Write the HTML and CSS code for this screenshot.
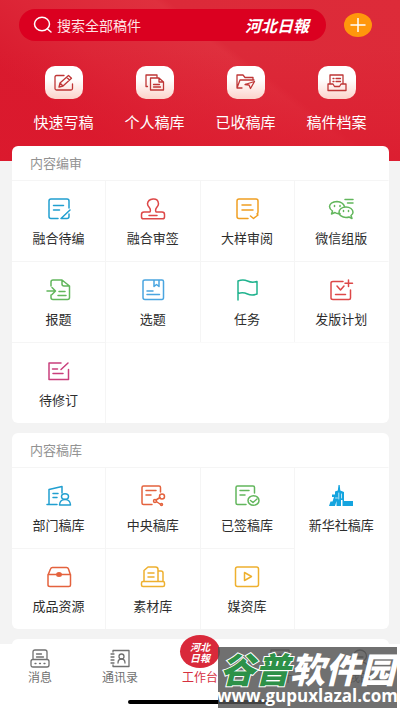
FILE: index.html
```html
<!DOCTYPE html>
<html lang="zh-CN">
<head>
<meta charset="utf-8">
<meta name="viewport" content="width=device-width, initial-scale=1">
<title>工作台</title>
<link rel="stylesheet" href="styles.css">
</head>
<body>
<div class="app">
  <main class="content">
    <header class="top">
      <div class="search-row">
        <label class="search">
          <svg class="search-icon" viewBox="0 0 20 18"><ellipse cx="9" cy="8" rx="7.5" ry="6.8"/><path d="M14.2 12.8 18 16"/></svg>
          <input type="search" placeholder="搜索全部稿件" aria-label="搜索全部稿件">
          <span class="brand">河北日報</span>
        </label>
        <button class="add" aria-label="新建"><svg viewBox="0 0 16 14"><path d="M8 .5v13M1 7h14"/></svg></button>
      </div>
      <nav class="shortcuts">
        <a href="#"><span class="tile"><svg viewBox="0 0 22 20"><path d="M11 2.500H3.500Q2 2.500 2 4v11.500q0 1.500 1.500 1.500H18q1.500 0 1.500-1.500V11M6 14l1-4 8.500-7.500 3 2.700-8.500 7.800zM7 10l3 3M13.500 4.300l3 2.700"/></svg></span><span>快速写稿</span></a>
        <a href="#"><span class="tile"><svg viewBox="0 0 22 20"><path d="M3.500 13.500H2V2h11v2M6.500 5h8.500l4.500 4v8h-13zM15 5v4h4.500M9.500 11.500h6M9.500 14h7"/></svg></span><span>个人稿库</span></a>
        <a href="#"><span class="tile"><svg viewBox="0 0 22 20"><path d="M2 15V2h6l2 2.500h8V7M2 15l3-8h14M2 15h5M5 7h12M10 11.500l9.500-3-4 7-1.500-3.500z"/></svg></span><span>已收稿库</span></a>
        <a href="#"><span class="tile"><svg viewBox="0 0 22 20"><path d="M4 11V2h13v9M7 5.500h1M10 5.500h4.500M7 8.500h1M10 8.500h4.500M2 11h5l1.500 2.500h5L15 11h5v6.500H2z"/></svg></span><span>稿件档案</span></a>
      </nav>
    </header>

    <div class="cards">
      <section class="card">
        <h2>内容编审</h2>
        <div class="grid">
          <a class="c-blue" href="#"><svg viewBox="0 0 26 22"><path d="M12 20.500H5q-2 0-2-2V3q0-2 2-2h16q2 0 2 2v7M7.500 7.500h10M7.500 12h6M15 20.500l9-8.500M15 20.500h6q2 0 2-2V16"/></svg><span>融合待编</span></a>
          <a class="c-red" href="#"><svg viewBox="0 0 26 22"><path d="M10 14c2-4-2.500-4.500-2.500-8.300Q8 1.500 13 1t5.500 4.700C18.500 9.500 14 10 16 14h6q2.500 0 2.500 2.500V19q0 1.800-2 1.800h-19q-2 0-2-1.800v-2.500Q1.500 14 4 14zM9 17.500h8"/></svg><span>融合审签</span></a>
          <a class="c-orange" href="#"><svg viewBox="0 0 26 22"><path d="M14 20.500H5q-2 0-2-2V3q0-2 2-2h17q2 0 2 2v11q0 1.500-1 2M8 7h9M8 12h11M16.500 18l3 2.500 4.500-3.500"/></svg><span>大样审阅</span></a>
          <a class="c-green" href="#"><svg viewBox="0 0 26 22"><path d="M17 1.500h8M19.500 5H25M12 15.500q-3 .5-5-1L3.500 16l1-3Q1.500 11 1.500 8.500 2 4 9 3.500q6 .5 7.500 5M6.500 7.500v1M12 7.500v1"/><path d="M18 9c-4 0-7 2.300-7 5.200s3 5.300 7 5.300q2 0 3-.5l3 1.500-1-3q2-1.500 2-3.300C25 11.300 22 9 18 9zM15.500 12.500v1M20.500 12.500v1"/></svg><span>微信组版</span></a>
          <a class="c-green" href="#"><svg viewBox="0 0 26 22"><path d="M5 7V3q0-2 2-2h9l7.500 6v11.500q0 2-2 2H7q-2 0-2-2V16M16 1v4q0 2 2 2h5.500M1 12h8M6 8.500 9.500 12 6 15.500M13 12.500h6M12 16.500h8"/></svg><span>报题</span></a>
          <a class="c-sky" href="#"><svg viewBox="0 0 26 22"><path d="M5 1h17q1.500 0 1.500 1.500v16q0 2-1.500 2H5q-2 0-2-2v-16Q3 1 5 1zM14 1.500v6l2.500-2L19 7.500v-6M7 12h6M7 15.500h12.500"/></svg><span>选题</span></a>
          <a class="c-teal" href="#"><svg viewBox="0 0 26 22"><path d="M4 21V2q5-2 9.500 0T23 2.500V15q-5 2-9.500 0T4 14.500"/></svg><span>任务</span></a>
          <a class="c-red" href="#"><svg viewBox="0 0 26 22"><path d="M15 2.500H5Q3 2.500 3 4v15q0 1.500 2 1.500h16q1.500 0 1.500-1.500v-8M20.500 1v6.500M17 4.300h7.500M9 7l3.500 4L16 7M7.500 15.500h10"/></svg><span>发版计划</span></a>
          <a class="c-pink" href="#"><svg viewBox="0 0 26 22"><path d="M15 3H3v16.500h19.500V9.500M6.500 9h5M7 13.500h10M15 9.500 22 3"/></svg><span>待修订</span></a>
          <div class="blank"></div>
        </div>
      </section>

      <section class="card">
        <h2>内容稿库</h2>
        <div class="grid">
          <a class="c-blue" href="#"><svg viewBox="0 0 26 22"><path d="M3 19.500V4.500L16 1.500V8M1 19.500h10M7 8.500h5M7 12.500h4"/><ellipse cx="19" cy="11.500" rx="3.500" ry="2.800"/><path d="M13.500 20c0-7.500 11-7.500 11 0z"/></svg><span>部门稿库</span></a>
          <a class="c-coral" href="#"><svg viewBox="0 0 26 22"><path d="M12 19.500H3.500Q2 19.500 2 18V2.500Q2 1 3.500 1H19q1.500 0 1.500 1.500V7M6 5.500h10M6 10h5M16 15l4-2.500M17 17l3 2"/><circle cx="22" cy="11.500" r="2.500"/><circle cx="15" cy="16" r="1.500"/><circle cx="21.500" cy="19.500" r="1"/></svg><span>中央稿库</span></a>
          <a class="c-green" href="#"><svg viewBox="0 0 26 22"><path d="M12 19.500H3.500Q2 19.500 2 18V2.500Q2 1 3.500 1H19q1.500 0 1.500 1.500V8M6 5.500h9M6 10h5"/><ellipse cx="19.500" cy="15.500" rx="5.500" ry="4.800"/><path d="m16.500 15.500 2.500 2 4-3.500"/></svg><span>已签稿库</span></a>
          <a class="c-cyan" href="#"><svg viewBox="0 0 26 22"><path class="solid" d="M10.500 0h1.200l.6 5.500 3.700 1.500V16h9v5H14.500v-6h-1.500v6H8.500v-5L7 21H1l1.500-4.500h2L6 12H4V9.500h3V6.500l2.800-1z"/><path class="cut" d="M10.800 8v6M13.500 9v4M7.500 13h2"/></svg><span>新华社稿库</span></a>
          <a class="c-coral" href="#"><svg viewBox="0 0 26 22"><path d="M6.500 1.500h14q1.500 0 2 1.500l2 6v10q0 1.500-1.500 1.500H4Q2 20.500 2 19V9l2.500-6q.5-1.500 2-1.500zM2 8.500h8M16 8.500h8.500"/><ellipse class="solid" cx="13" cy="8.500" rx="3" ry="2.500"/></svg><span>成品资源</span></a>
          <a class="c-amber" href="#"><svg viewBox="0 0 26 22"><path d="M4 15V4.500L8 1h7.500Q18 1 18 3.500V15M18 5h3q2 0 2 2v8M8 7h6M8 11h6M3 15.500h20q1.500 0 1.500 1.500v2q0 1.500-1.500 1.500H3q-1.500 0-1.500-1.500v-2q0-1.500 1.500-1.500z"/></svg><span>素材库</span></a>
          <a class="c-amber" href="#"><svg viewBox="0 0 26 22"><rect x="1.500" y="1" width="23" height="19.500" rx="2"/><path d="M10.500 6.500v8l7-4z"/></svg><span>媒资库</span></a>
        </div>
      </section>
      <section class="card card-next"></section>
    </div>
  </main>

  <nav class="tabs">
    <a href="#"><svg viewBox="0 0 20 19"><path d="M3 10V3q0-2 2-2h10q2 0 2 2v7M6.500 5h5M6.500 8h7M3 10.500h14q2 0 2 2V16q0 2-2 2H3q-2 0-2-2v-3.500q0-2 2-2zM5 14.500h1M9.500 14.500h1M14 14.500h1"/></svg><span>消息</span></a>
    <a href="#"><svg viewBox="0 0 20 19"><path d="M3 3V1.500h16V17.500H3V16M1 5h3M1 8h3M1 11h3M1 14h3M8 14q0-4 3.500-4t3.500 4"/><circle cx="11.500" cy="7.500" r="2.500"/></svg><span>通讯录</span></a>
    <a class="active" href="#"><b class="seal">河北<br>日報</b><span>工作台</span></a>
    <a href="#"><svg viewBox="0 0 20 19"><path d="M1 1h18v16H1zM7 7l3-2 1 2 3-2"/></svg><span>统计</span></a>
    <a href="#"><svg viewBox="0 0 20 19"><ellipse cx="10" cy="7" rx="6.500" ry="6"/><path d="M7 8h6M2 18q1-5 8-5t8 5"/></svg><span>我的</span></a>
    <div class="home-bar"></div>
  </nav>
  <div class="watermark">
    <strong><em>谷普</em>软件园</strong>
    <span>www.gupuxlazal.com</span>
  </div>
</div>
</body>
</html>
```
FILE: styles.css
```css
* { box-sizing: border-box; }
body {
  margin: 0;
  font-family: "Noto Sans CJK SC", sans-serif;
  background: #f3f3f3;
  color: #2d2d2d;
}
a { color: inherit; text-decoration: none; }
svg {
  display: block;
  fill: none;
  stroke: currentColor;
  stroke-width: 1.5;
  stroke-linecap: round;
  stroke-linejoin: round;
}
.app {
  position: relative;
  height: 100vh;
  display: flex;
  flex-direction: column;
}
.content {
  flex: 1;
  min-height: 0;
  overflow-y: auto;
  scrollbar-width: none;
}

/* header */
.top {
  padding: 9px 18px 29px;
  background:
    linear-gradient(to bottom, transparent 30%, rgba(220, 25, 45, .7)),
    linear-gradient(37deg, #d91a2e 0 20%, #dd2637 38%, #df303e 60%, #dc2a39 62%, #dd2b39);
}
.search-row { display: flex; align-items: center; }
.search {
  flex: 1;
  display: flex;
  align-items: center;
  height: 32px;
  margin-left: 1px;
  padding: 0 17px 0 14px;
  border-radius: 16px;
  background: #db0020;
  color: #fff;
}
.search-icon { width: 20px; height: 18px; margin-right: 4px; }
.search input {
  flex: 1;
  min-width: 0;
  padding: 0;
  border: 0;
  outline: 0;
  background: none;
  color: #fff;
  font: 14px/20px "Noto Sans CJK SC", sans-serif;
}
.search input::placeholder { color: #ffe3e4; opacity: 1; }
.brand { font: italic 700 16px/20px "Noto Sans CJK TC", sans-serif; }
.add {
  display: grid;
  place-items: center;
  width: 28px;
  height: 24px;
  margin: 0 10px 0 18px;
  padding: 0;
  border: 0;
  border-radius: 50%;
  background: #ff970c;
  color: #fff;
}
.add svg { width: 16px; height: 14px; }
.shortcuts {
  display: grid;
  grid-template-columns: repeat(4, 1fr);
  margin-top: 25px;
}
.shortcuts a {
  display: flex;
  flex-direction: column;
  align-items: center;
  gap: 13px;
  color: #fff;
  font-size: 15px;
  line-height: 20px;
}
.tile {
  display: grid;
  place-items: center;
  width: 38px;
  height: 33px;
  border-radius: 10px;
  background: linear-gradient(#fff 40%, #fcd3cb);
  color: #bf3636;
}
.tile svg { width: 22px; height: 20px; stroke-width: 1.3; }

/* cards */
.cards {
  display: flex;
  flex-direction: column;
  gap: 10px;
  margin-top: -15px;
  padding: 0 11px 0 12px;
}
.card {
  overflow: hidden;
  flex: none;
  border-radius: 6px;
  background: #fff;
}
.card h2 {
  margin: 0;
  padding: 0 18px;
  color: #929292;
  font-size: 13px;
  font-weight: 400;
  line-height: 34px;
}
.card-next { height: 34px; }
.grid {
  display: grid;
  grid-template-columns: repeat(4, 1fr);
}
.grid a {
  display: flex;
  flex-direction: column;
  align-items: center;
  gap: 9px;
  height: 81px;
  padding-top: 17px;
  border-top: 1px solid #f5f5f5;
  border-right: 1px solid #f5f5f5;
}
.grid a:nth-child(4n) { border-right-color: transparent; }
.grid svg { width: 26px; height: 22px; }
.grid span {
  color: #2d2d2d;
  font-size: 13px;
  line-height: 18px;
  white-space: nowrap;
}
.blank { grid-column: span 3; border-top: 1px solid #fafafa; }
.solid { fill: currentColor; stroke: none; }
.cut { stroke: #fff; stroke-width: .7; }
.c-blue { color: #219fd0; }
.c-cyan { color: #14a4df; }
.c-sky { color: #4aa5e0; }
.c-red { color: #dd4848; }
.c-coral { color: #e4623d; }
.c-orange { color: #f09f22; }
.c-amber { color: #eeb02f; }
.c-green { color: #62b65c; }
.c-teal { color: #20b38e; }
.c-pink { color: #c93f7c; }

/* bottom tabs */
.tabs {
  position: relative;
  display: grid;
  grid-template-columns: repeat(5, 1fr);
  height: 67px;
  padding-top: 5px;
  background: #fff;
}
.tabs a {
  display: flex;
  flex-direction: column;
  align-items: center;
  gap: 1px;
  height: 40px;
  color: #707070;
  font-size: 12px;
  line-height: 16px;
}
.tabs svg { width: 20px; height: 19px; stroke-width: 1.3; }
.tabs .active {
  justify-content: flex-end;
  margin-top: -10px;
  height: 46px;
  color: #d6303f;
}
.seal {
  display: grid;
  place-items: center;
  width: 40px;
  height: 33px;
  flex: none;
  border-radius: 50%;
  background: #d9293a;
  color: #fff;
  font: italic 700 10px/11px "Noto Sans CJK TC", sans-serif;
}
.home-bar {
  position: absolute;
  bottom: 7px;
  left: 50%;
  width: 36%;
  height: 4px;
  border-radius: 2px;
  background: #000;
  transform: translateX(-50%);
}

/* site mark over the tab bar */
.watermark {
  position: absolute;
  right: 3px;
  bottom: 3px;
  display: flex;
  flex-direction: column;
  align-items: center;
  height: 61px;
  width: 179px;
  background: rgba(80, 80, 80, .82);
  color: #fff;
  white-space: nowrap;
}
.watermark strong {
  padding-top: 2px;
  font-size: 35px;
  font-style: italic;
  font-weight: 900;
  line-height: 38px;
}
.watermark em {
  color: #2d9148;
  paint-order: stroke;
  -webkit-text-stroke: 2px #fff;
}
.watermark span { font: 700 17px/18px "Open Sans", sans-serif; }
```
